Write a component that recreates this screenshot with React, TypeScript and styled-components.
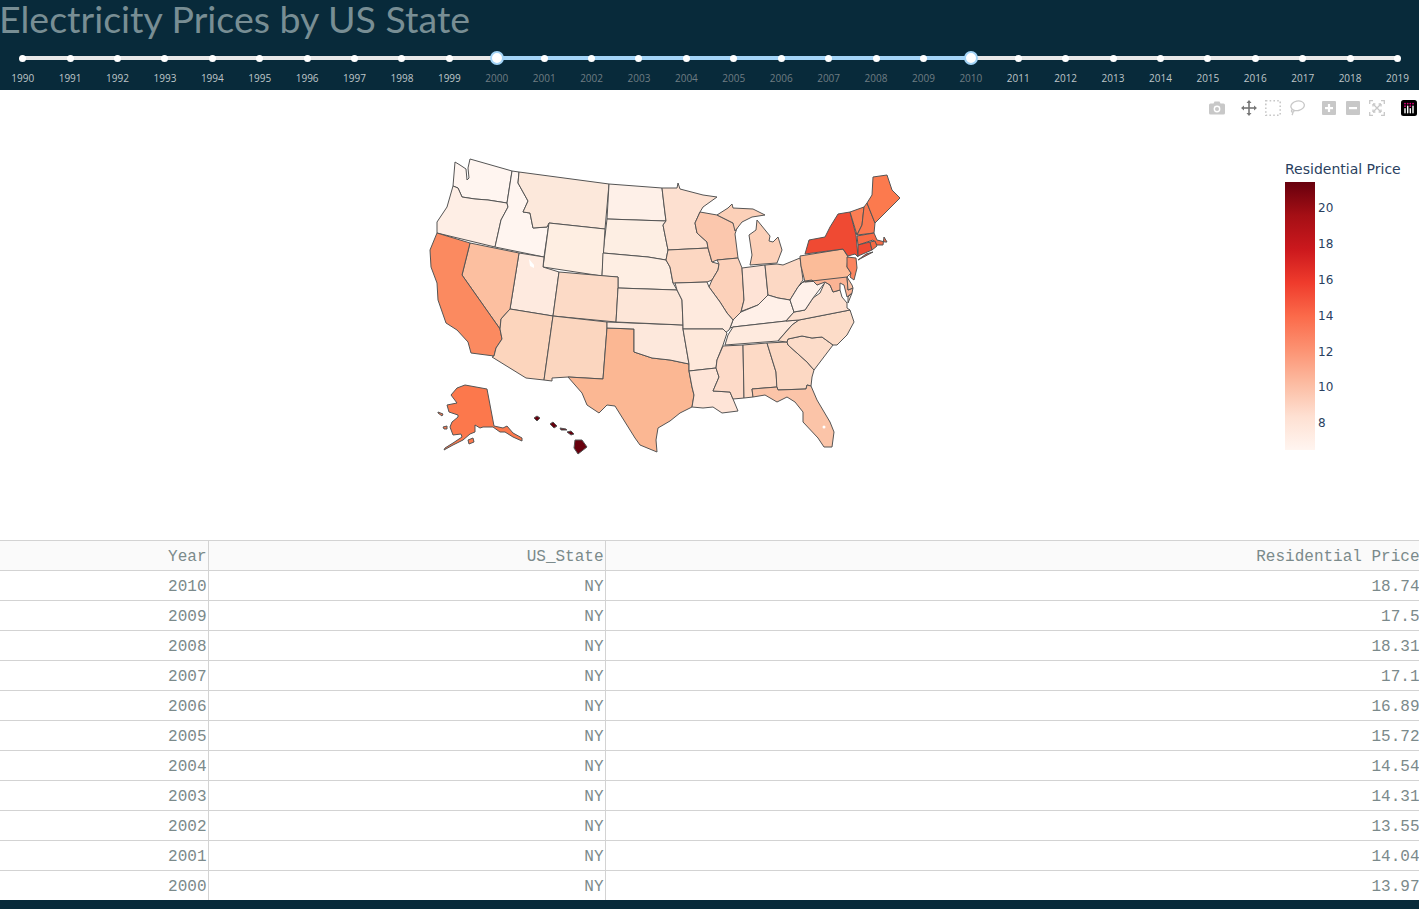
import styled, { createGlobalStyle } from 'styled-components';

const GlobalStyle = createGlobalStyle`
  html, body {
    margin: 0;
    padding: 0;
    background: #082a3a;
    overflow: hidden;
  }
`;

const Page = styled.div`
  width: 1419px;
  height: 909px;
  overflow: hidden;
  display: flex;
  flex-direction: column;
  background: #082a3a;
`;

const Header = styled.header`
  height: 90px;
  flex: none;
  overflow: hidden;
`;

const Title = styled.h1`
  margin: 0 0 0 -1px;
  height: 50px;
  font-family: 'Lato', sans-serif;
  font-weight: 400;
  font-size: 37.5px;
  line-height: 37px;
  color: #788e94;
  white-space: nowrap;
`;

const Slider = styled.div`
  position: relative;
  display: flex;
  width: 1422px;
  margin-left: -1px;
`;

const Rail = styled.div`
  position: absolute;
  top: 6px;
  left: 24px;
  right: 24px;
  height: 4px;
  background: #e8e8e8;
  border-radius: 2px;
`;

const RailRange = styled.div`
  position: absolute;
  top: 6px;
  height: 4px;
  background: #a3d4f7;
`;

const Mark = styled.div`
  position: relative;
  flex: 1;
  display: flex;
  flex-direction: column;
  align-items: center;
`;

const DotSlot = styled.div`
  height: 16px;
  display: flex;
  align-items: center;
  justify-content: center;
`;

const Dot = styled.span<{ $handle: boolean }>`
  display: block;
  box-sizing: border-box;
  width: ${(p) => (p.$handle ? 14 : 7)}px;
  height: ${(p) => (p.$handle ? 14 : 7)}px;
  border-radius: 50%;
  background: #fff;
  border: ${(p) => (p.$handle ? '2px solid #a3d4f7' : 'none')};
`;

const MarkLabel = styled.span<{ $inRange: boolean }>`
  margin-top: 5px;
  font-family: 'Open Sans', sans-serif;
  font-size: 10px;
  line-height: 14px;
  color: ${(p) => (p.$inRange ? '#6f7d83' : '#bfc6c9')};
`;

const PlotArea = styled.section`
  position: relative;
  height: 450px;
  flex: none;
  background: #fff;
  display: flex;
  padding: 60px 0 0 420px;
  box-sizing: border-box;
`;

const ModeBar = styled.div`
  position: absolute;
  top: 10px;
  right: -2px;
  display: flex;
  align-items: center;
`;

const ModeGroup = styled.div`
  display: flex;
  margin-left: 8px;
`;

const ModeButton = styled.span`
  width: 24px;
  height: 16px;
  display: flex;
  align-items: center;
  justify-content: center;
`;

const MapSvg = styled.svg`
  display: block;
  width: 500px;
  height: 320px;
  flex: none;
`;

const ColorBar = styled.div`
  margin-left: 365px;
  font-family: 'DejaVu Sans', sans-serif;
  color: #2a3f5f;
`;

const ColorBarTitle = styled.div`
  font-size: 14px;
  line-height: 19px;
  margin: 10px 0 3px 0;
  white-space: nowrap;
`;

const ColorBarBody = styled.div`
  display: flex;
  gap: 3px;
`;

const Ramp = styled.div`
  width: 30px;
  height: 268px;
  background: linear-gradient(
    to top,
    #fff5f0 0%,
    #fee0d2 12.5%,
    #fcbba1 25%,
    #fc9272 37.5%,
    #fb6a4a 50%,
    #ef3b2c 62.5%,
    #cb181d 75%,
    #a50f15 87.5%,
    #67000d 100%
  );
`;

const TickList = styled.div`
  display: flex;
  flex-direction: column;
  padding-top: 18px;
`;

const Tick = styled.div`
  height: 35.9px;
  font-size: 12px;
  line-height: 17px;
`;

const TableWrap = styled.div`
  flex: none;
  background: #fff;
  height: 360px;
  overflow: hidden;
`;

const DataTable = styled.table`
  width: 1421px;
  table-layout: fixed;
  border-collapse: collapse;
  font-family: 'Liberation Mono', monospace;
  font-size: 16px;
  color: #7b8a8b;
`;

const Th = styled.th<{ $w: number }>`
  width: ${(p) => p.$w}px;
  height: 30px;
  box-sizing: border-box;
  padding: 2px 1px 0 2px;
  text-align: right;
  font-weight: 400;
  background: #fafafa;
  border: 1px solid #d3d3d3;
  border-left: none;
`;

const Td = styled.td`
  height: 30px;
  box-sizing: border-box;
  padding: 2px 1px 0 2px;
  text-align: right;
  border-bottom: 1px solid #d3d3d3;
  border-right: 1px solid #d3d3d3;
`;

const YEARS = Array.from({ length: 30 }, (_, i) => 1990 + i);

const ROWS: [string, string][] = [
  ['2010', '18.74'],
  ['2009', '17.5'],
  ['2008', '18.31'],
  ['2007', '17.1'],
  ['2006', '16.89'],
  ['2005', '15.72'],
  ['2004', '14.54'],
  ['2003', '14.31'],
  ['2002', '13.55'],
  ['2001', '14.04'],
  ['2000', '13.97'],
];

// outlines are traced in page pixels, the svg viewBox starts at 420,150
const STATES: [string, string][] = [
  ['#fff5f0', '470,159 512,171 507,203 488,200 475,199 462,197 458,188 453,186 455,162 460,165 466,169 467,180 469,178 468,168'],
  ['#feeee5', '453,186 458,188 462,197 475,199 488,200 507,203 508,207 501,220 495,247 437,233 437,222 447,207'],
  ['#fff5f0', '512,171 519,172 518,183 528,201 523,212 530,213 533,228 547,227 549,223 544,257 495,247 501,220 508,207 507,203'],
  ['#fce8db', '519,172 609,184 605,229 549,223 547,227 533,228 530,213 523,212 528,201 518,183'],
  ['#fef0e8', '609,184 662,188 664,205 666,221 607,219'],
  ['#fdeee3', '607,219 666,221 663,225 668,250 666,260 648,257 603,253'],
  ['#feeee2', '549,223 605,229 602,276 543,267'],
  ['#feeee3', '603,253 648,257 666,260 670,267 673,283 677,290 618,288 618,277 602,276'],
  ['#feeadf', '519,253 544,257 543,267 559,272 553,316 510,309'],
  ['#fcbfa0', '470,243 519,253 510,309 501,319 500,329 462,275'],
  ['#fb8a60', '437,233 470,243 462,275 500,329 502,339 496,348 494,356 471,353 468,342 457,330 446,323 438,300 437,283 431,267 430,250'],
  ['#fcd5bd', '510,309 553,316 544,380 526,378 492,357 494,356 496,348 502,339 500,329 501,319'],
  ['#fcdac6', '559,272 618,277 618,288 616,322 553,316'],
  ['#fbd6bf', '553,316 607,322 607,328 603,379 568,377 552,378 552,381 544,380'],
  ['#fbb793', '607,328 634,329 634,352 652,358 670,360 689,364 689,371 692,387 694,395 692,407 680,413 670,421 658,428 656,440 657,452 640,445 635,438 625,422 615,406 607,405 599,413 587,405 582,393 568,377 603,379'],
  ['#fde8dc', '607,322 683,325 683,329 689,364 670,360 652,358 634,352 634,329 607,328'],
  ['#fde6d8', '618,288 677,290 682,300 683,325 616,322'],
  ['#fde0d0', '662,188 677,188 678,183 680,189 703,195 717,197 703,207 700,212 695,223 697,233 707,242 708,248 668,250 663,225 666,221 664,205'],
  ['#fcd7c2', '668,250 708,248 712,262 719,264 718,270 712,280 707,282 675,283 673,283 670,267 666,260'],
  ['#fbc7ad', '700,212 717,215 733,223 737,228 735,234 738,258 717,260 712,262 708,248 707,242 697,233 695,223'],
  ['#fcd0b8', '717,215 728,208 732,204 733,208 753,209 765,215 752,217 742,222 735,231 733,223'],
  ['#fcd0b8', '750,265 777,263 782,250 778,237 773,242 769,241 770,236 757,220 756,230 749,235 752,255'],
  ['#fcd1ba', '717,260 738,258 742,268 744,300 741,312 733,320 727,313 720,302 709,287 712,280 718,270 719,264'],
  ['#fee3d6', '742,268 765,265 768,295 758,305 742,311 741,312 744,300'],
  ['#fcd8c4', '765,265 777,264 783,265 800,258 803,280 798,287 790,300 778,298 768,295'],
  ['#fff0e8', '730,328 733,320 741,312 758,305 768,295 778,298 790,300 794,312 786,321 733,327'],
  ['#feeade', '733,327 786,321 799,320 792,325 783,335 778,341 725,345 728,335'],
  ['#feeade', '675,283 707,282 709,287 720,302 727,313 733,320 730,328 729,330 725,333 723,329 683,329 683,325 682,300 677,290'],
  ['#fee8da', '683,329 723,329 727,333 723,345 717,360 716,368 689,371 689,364'],
  ['#fee4d7', '689,371 716,368 719,377 713,391 730,392 733,399 738,411 722,413 713,407 703,408 692,407 694,395 692,387'],
  ['#fddac8', '723,346 743,345 744,398 733,399 730,392 713,391 719,377 716,368 717,360'],
  ['#fddac6', '743,345 767,343 776,372 777,387 752,389 753,397 744,398'],
  ['#fcd8c3', '767,343 787,342 788,345 807,362 814,370 812,377 811,386 807,385 806,389 777,390 776,372'],
  ['#fbc4a8', '752,389 777,387 778,390 806,389 807,385 811,386 817,400 830,422 834,432 832,447 824,447 818,438 803,422 803,412 795,402 787,397 777,402 765,395 753,397'],
  ['#fcdcc9', '787,342 788,339 802,336 812,338 822,337 833,345 814,370 807,362 788,345'],
  ['#fcdcc8', '778,341 785,333 792,325 799,320 850,310 854,322 847,335 837,345 833,345 822,337 812,338 802,336 788,339 787,342'],
  ['#fde0d0', '786,321 794,312 805,310 813,298 820,293 825,282 830,285 833,292 840,290 842,297 847,303 847,308 850,310 799,320'],
  ['#fde0d0', '848,297 852,293 848,303'],
  ['#fff1ea', '803,282 798,287 790,300 794,312 805,310 813,298 823,285 827,280 822,282 817,285 812,280 805,281'],
  ['#fbbc99', '800,256 843,249 848,257 847,267 851,273 845,279 805,282 801,266'],
  ['#fbb394', '803,282 847,277 848,290 853,288 852,293 847,297 844,285 840,283 840,290 833,292 830,285 825,282 817,285 812,280 805,281'],
  ['#fcc0a2', '847,277 852,285 853,288 848,290'],
  ['#fb8560', '847,257 856,258 857,268 854,280 850,277 851,273 847,267'],
  ['#ef4a33', '805,254 809,240 825,237 830,227 838,214 850,212 856,235 858,257 855,254 848,256 843,249'],
  ['#ef4a33', '858,260 873,252 866,254'],
  ['#fc7e54', '850,212 864,207 862,225 857,235'],
  ['#fb7850', '864,207 867,203 875,223 874,233 857,235 862,225'],
  ['#fc7a4e', '867,203 872,195 873,177 887,175 892,190 900,198 883,215 875,223'],
  ['#f86b46', '857,236 874,233 877,240 885,242 887,242 884,237 883,245 877,245 873,240 858,245'],
  ['#ee4a33', '858,245 870,242 872,250 858,256'],
  ['#f46b45', '870,242 875,241 877,246 872,250'],
  ['#fc784c', '465,385 487,389 494,426 503,428 507,426 513,433 522,438 522,441 513,437 505,432 500,432 493,427 483,427 480,428 475,425 475,432 470,434 463,440 453,445 444,450 445,448 453,443 462,437 461,434 453,435 450,427 452,422 458,417 458,415 449,412 447,405 457,403 451,395 457,388'],
  ['#fc784c', '468,440 473,438 474,442 469,444'],
  ['#fc784c', '438,412 443,414 442,416 438,413'],
  ['#fc784c', '443,427 447,426 447,429 444,429'],
  ['#67000d', '534,418 537,416 540,418 537,421'],
  ['#67000d', '550,424 553,422 557,426 554,428'],
  ['#67000d', '560,428 566,429 567,430 561,430'],
  ['#67000d', '567,432 571,431 574,434 571,435'],
  ['#67000d', '575,440 582,440 587,447 578,454 574,448'],
];

const CameraIcon = () => (
  <svg width="16" height="14" viewBox="0 0 16 14">
    <path fill="#c8c8c8" d="M1.5 2.5h3l1-2h5l1 2h3a1.5 1.5 0 0 1 1.5 1.5v8a1.5 1.5 0 0 1-1.5 1.5h-13A1.5 1.5 0 0 1 0 12V4a1.5 1.5 0 0 1 1.5-1.5z" />
    <circle cx="8" cy="8" r="3.4" fill="#fff" />
    <circle cx="8" cy="8" r="2" fill="#c8c8c8" />
  </svg>
);

const PanIcon = () => (
  <svg width="16" height="16" viewBox="0 0 16 16" fill="#777">
    <rect x="7.2" y="2" width="1.6" height="12" />
    <rect x="2" y="7.2" width="12" height="1.6" />
    <path d="M8 0l2.5 3h-5zM8 16l-2.5-3h5zM0 8l3-2.5v5zM16 8l-3 2.5v-5z" />
  </svg>
);

const BoxIcon = () => (
  <svg width="16" height="16" viewBox="0 0 16 16">
    <rect x="0.8" y="0.8" width="14.4" height="14.4" fill="none" stroke="#c8c8c8" strokeWidth="1.6" strokeDasharray="1.6 2.2" />
  </svg>
);

const LassoIcon = () => (
  <svg width="16" height="16" viewBox="0 0 16 16" fill="none" stroke="#c8c8c8" strokeWidth="1.3">
    <ellipse cx="8.6" cy="5.8" rx="6.8" ry="4.8" transform="rotate(-12 8.6 5.8)" />
    <path d="M3.4 9.6c-1.6 1-1 2.6.4 2.6 1.2 0 1.4-1 .6-1.6M3.8 12.2c.2 1.2-.2 2-.8 3" />
  </svg>
);

const ZoomSquare = ({ plus }: { plus: boolean }) => (
  <svg width="14" height="14" viewBox="0 0 14 14">
    <rect width="14" height="14" rx="1" fill="#c8c8c8" />
    <rect x="3" y="6" width="8" height="2.2" fill="#fff" />
    {plus && <rect x="5.9" y="3" width="2.2" height="8" fill="#fff" />}
  </svg>
);

const AutoscaleIcon = () => (
  <svg width="16" height="16" viewBox="0 0 16 16" fill="none" stroke="#c8c8c8" strokeWidth="1.3">
    <path d="M.7 4V.7H4M12 .7h3.3V4M15.3 12v3.3H12M4 15.3H.7V12" />
    <path d="M4 4l8 8M12 4l-8 8" />
    <path d="M4 4h2.4M4 4v2.4M12 12H9.6M12 12V9.6M12 4H9.6M12 4v2.4M4 12h2.4M4 12V9.6" />
  </svg>
);

const PlotlyLogo = () => (
  <svg width="16" height="16" viewBox="0 0 16 16">
    <rect width="16" height="16" rx="2.5" fill="#000" />
    <g fill="#e6007e">
      <circle cx="4" cy="3.6" r="0.9" />
      <circle cx="6.7" cy="3.6" r="0.9" />
      <circle cx="9.3" cy="3.6" r="0.9" />
      <circle cx="12" cy="3.6" r="0.9" />
      <circle cx="4" cy="6.2" r="0.9" />
      <circle cx="9.3" cy="6.2" r="0.9" />
    </g>
    <g fill="#fff">
      <rect x="3.3" y="8" width="1.4" height="5.5" rx="0.7" />
      <rect x="6" y="5.4" width="1.4" height="8.1" rx="0.7" />
      <rect x="8.6" y="8" width="1.4" height="5.5" rx="0.7" />
      <rect x="11.3" y="5.4" width="1.4" height="8.1" rx="0.7" />
    </g>
  </svg>
);

const App = () => {
  const step = 100 / 30;
  return (
    <Page>
      <GlobalStyle />
      <Header>
        <Title>Electricity Prices by US State</Title>
        <Slider>
          <Rail />
          <RailRange style={{ left: `${(10.5 * step).toFixed(3)}%`, width: `${(10 * step).toFixed(3)}%` }} />
          {YEARS.map((year) => (
            <Mark key={year}>
              <DotSlot>
                <Dot $handle={year === 2000 || year === 2010} />
              </DotSlot>
              <MarkLabel $inRange={year >= 2000 && year <= 2010}>{year}</MarkLabel>
            </Mark>
          ))}
        </Slider>
      </Header>

      <PlotArea>
        <ModeBar>
          <ModeGroup>
            <ModeButton><CameraIcon /></ModeButton>
          </ModeGroup>
          <ModeGroup>
            <ModeButton><PanIcon /></ModeButton>
            <ModeButton><BoxIcon /></ModeButton>
            <ModeButton><LassoIcon /></ModeButton>
          </ModeGroup>
          <ModeGroup>
            <ModeButton><ZoomSquare plus /></ModeButton>
            <ModeButton><ZoomSquare plus={false} /></ModeButton>
            <ModeButton><AutoscaleIcon /></ModeButton>
          </ModeGroup>
          <ModeGroup>
            <ModeButton><PlotlyLogo /></ModeButton>
          </ModeGroup>
        </ModeBar>

        <MapSvg viewBox="420 150 500 320">
          {STATES.map(([fill, points]) => (
            <polygon key={points} points={points} fill={fill} stroke="#555" strokeWidth="1" strokeLinejoin="round" />
          ))}
          <polygon points="529,259 534,265 534,268 530,266" fill="#fff" />
          <circle cx="824" cy="427" r="1.5" fill="#fff" />
        </MapSvg>

        <ColorBar>
          <ColorBarTitle>Residential Price</ColorBarTitle>
          <ColorBarBody>
            <Ramp />
            <TickList>
              {[20, 18, 16, 14, 12, 10, 8].map((t) => (
                <Tick key={t}>{t}</Tick>
              ))}
            </TickList>
          </ColorBarBody>
        </ColorBar>
      </PlotArea>

      <TableWrap>
        <DataTable>
          <thead>
            <tr>
              <Th $w={208}>Year</Th>
              <Th $w={397}>US_State</Th>
              <Th $w={816}>Residential Price</Th>
            </tr>
          </thead>
          <tbody>
            {ROWS.map(([year, price]) => (
              <tr key={year}>
                <Td>{year}</Td>
                <Td>NY</Td>
                <Td>{price}</Td>
              </tr>
            ))}
          </tbody>
        </DataTable>
      </TableWrap>
    </Page>
  );
};

export default App;
